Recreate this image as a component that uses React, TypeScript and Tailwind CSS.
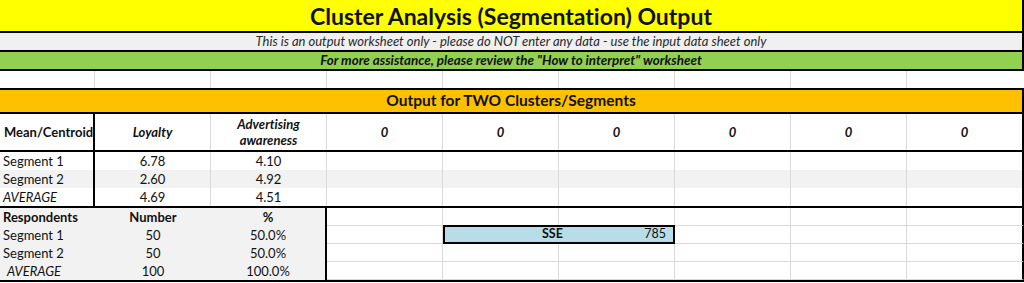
const font = "font-['Lato','Liberation_Sans',sans-serif] [font-variant-ligatures:none]";

const meanRows = [
  { label: "Segment 1", a: "6.78", b: "4.10", bg: "bg-white", italic: false },
  { label: "Segment 2", a: "2.60", b: "4.92", bg: "bg-[#f2f2f2]", italic: false },
  { label: "AVERAGE", a: "4.69", b: "4.51", bg: "bg-white", italic: true },
];

const respRows = [
  { label: "Segment 1", n: "50", p: "50.0%" },
  { label: "Segment 2", n: "50", p: "50.0%" },
  { label: "AVERAGE", n: "100", p: "100.0%" },
];

const EmptyCols = ({ h }: { h: string }) => (
  <>
    {[0, 1, 2, 3, 4].map((i) => (
      <div key={i} className={`w-[116px] ${h} border-r border-[#d9d9d9]`} />
    ))}
    <div className={`w-[117px] ${h} border-r-2 border-black`} />
  </>
);

const Banner = ({
  bg,
  h,
  children,
  className,
}: {
  bg: string;
  h: string;
  children: React.ReactNode;
  className: string;
}) => (
  <div
    className={`${bg} ${h} w-[1024px] border-r-2 border-b-2 border-black flex items-center justify-center ${className}`}
  >
    {children}
  </div>
);

export default function App() {
  return (
    <div className={`w-[1024px] h-[283px] bg-white overflow-hidden text-[13px] text-[#111] leading-none ${font}`}>
      <Banner bg="bg-[#ffff00]" h="h-[33px]" className="text-[23px] font-bold pt-[2px]">
        Cluster Analysis (Segmentation) Output
      </Banner>
      <Banner bg="bg-[#f0f0f0]" h="h-[19px]" className="text-[13px] italic text-[#2a2a2a]">
        This is an output worksheet only - please do NOT enter any data - use the input data sheet only
      </Banner>
      <Banner bg="bg-[#92d050]" h="h-[19px]" className="text-[13.4px] italic font-bold">
        For more assistance, please review the "How to interpret" worksheet
      </Banner>

      <div className="flex h-[19px] border-b-2 border-black">
        <div className="w-[95px] border-r border-[#d9d9d9]" />
        {[0, 1, 2, 3, 4, 5, 6].map((i) => (
          <div key={i} className="w-[116px] border-r border-[#d9d9d9]" />
        ))}
      </div>

      <Banner bg="bg-[#ffc000]" h="h-[24px]" className="text-[15.5px] font-bold">
        Output for TWO Clusters/Segments
      </Banner>

      <div className="flex h-[38px] border-b-2 border-black">
        <div className="w-[95px] border-r-2 border-black flex items-center px-[4px] font-bold">
          Mean/Centroid
        </div>
        <div className="w-[116px] border-r border-[#d9d9d9] flex items-center justify-center font-bold italic">
          Loyalty
        </div>
        <div className="w-[116px] border-r border-[#d9d9d9] flex flex-col items-center justify-center gap-[3px] font-bold italic">
          <span>Advertising</span>
          <span>awareness</span>
        </div>
        {[0, 1, 2, 3, 4].map((i) => (
          <div
            key={i}
            className="w-[116px] border-r border-[#d9d9d9] flex items-center justify-center font-bold italic"
          >
            0
          </div>
        ))}
        <div className="w-[117px] border-r-2 border-black flex items-center justify-center font-bold italic">
          0
        </div>
      </div>

      {meanRows.map((r) => (
        <div key={r.label} className={`flex h-[18px] ${r.bg}`}>
          <div className={`w-[95px] border-r-2 border-black flex items-center px-[3px] ${r.italic ? "italic" : ""}`}>
            {r.label}
          </div>
          <div className="w-[116px] border-r border-[#d9d9d9] flex items-center justify-center">{r.a}</div>
          <div className="w-[116px] border-r border-[#d9d9d9] flex items-center justify-center">{r.b}</div>
          <EmptyCols h="h-[18px]" />
        </div>
      ))}

      <div className="flex border-t-2 border-b-2 border-black">
        <div className="w-[327px] bg-[#f2f2f2] border-r-2 border-black flex flex-col">
          <div className="flex h-[18px] items-center font-bold">
            <div className="w-[95px] px-[3px]">Respondents</div>
            <div className="w-[116px] text-center">Number</div>
            <div className="w-[114px] text-center">%</div>
          </div>
          {respRows.map((r) => (
            <div key={r.label} className="flex h-[18px] items-center">
              <div className={`w-[95px] ${r.label === "AVERAGE" ? "italic pl-[7px]" : "px-[3px]"}`}>{r.label}</div>
              <div className="w-[116px] text-center">{r.n}</div>
              <div className="w-[114px] text-center">{r.p}</div>
            </div>
          ))}
        </div>
        <div className="flex flex-col">
          {[0, 1, 2, 3].map((row) => (
            <div key={row} className="flex h-[18px]">
              <div className="w-[116px] border-r border-b border-[#d9d9d9]" />
              {row === 1 ? (
                <div className="w-[232px] h-[19px] -mt-px bg-[#b7dde8] border-2 border-black flex items-center font-bold text-[12.5px]">
                  <div className="w-[114px]" />
                  <div className="flex-1 flex items-center justify-between pr-[7px]">
                    <span className="-ml-[17px]">SSE</span>
                    <span className="font-normal">785</span>
                  </div>
                </div>
              ) : (
                <>
                  <div className="w-[116px] border-r border-b border-[#d9d9d9]" />
                  <div className="w-[116px] border-r border-b border-[#d9d9d9]" />
                </>
              )}
              <div className="w-[116px] border-r border-b border-[#d9d9d9]" />
              <div className="w-[116px] border-r border-b border-[#d9d9d9]" />
              <div className="w-[117px] border-r-2 border-b border-r-black border-b-[#d9d9d9]" />
            </div>
          ))}
        </div>
      </div>
    </div>
  );
}
